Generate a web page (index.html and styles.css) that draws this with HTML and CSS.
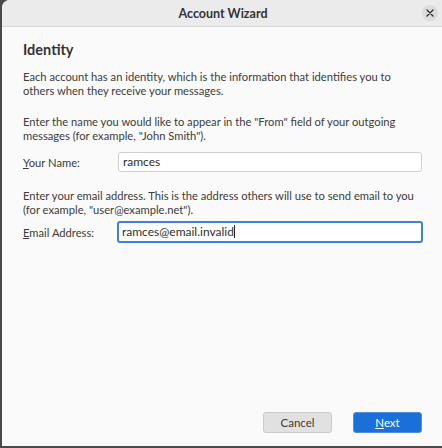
FILE: index.html
```html
<!DOCTYPE html>
<html lang="en">
<head>
<meta charset="utf-8">
<title>Account Wizard</title>
<link rel="stylesheet" href="styles.css">
</head>
<body>
<div class="window">
  <header class="titlebar">
    <span class="spacer"></span>
    <span class="title">Account Wizard</span>
    <span class="controls">
      <span class="close" aria-label="Close">
        <svg width="8" height="8" viewBox="0 0 8 8"><path d="M1 1 L7 7 M7 1 L1 7" stroke="#2e2e2e" stroke-width="1.3" stroke-linecap="round"/></svg>
      </span>
    </span>
  </header>
  <main class="content">
    <h1 class="heading">Identity</h1>
    <p class="para p1">Each account has an identity, which is the information that identifies you to others when they receive your messages.</p>
    <p class="para p2">Enter the name you would like to appear in the "From" field of your outgoing messages (for example, "John Smith").</p>
    <div class="row row-name">
      <label class="label"><u>Y</u>our Name:</label>
      <div class="input">ramces</div>
    </div>
    <p class="para p3">Enter your email address. This is the address others will use to send email to you (for example, "user@example.net").</p>
    <div class="row row-email">
      <label class="label"><u>E</u>mail Address:</label>
      <div class="input focused">ramces@email.invalid<span class="caret"></span></div>
    </div>
    <div class="grow"></div>
    <div class="buttons">
      <button class="btn cancel">Cancel</button>
      <button class="btn next"><u>N</u>ext</button>
    </div>
  </main>
</div>
</body>
</html>
```
FILE: styles.css
```css
html, body {
  margin: 0;
  padding: 0;
  width: 442px;
  height: 448px;
  overflow: hidden;
  background: #4a4a4a;
}
body {
  font-family: Lato, "Open Sans", sans-serif;
  color: #3c3c3c;
}
.window {
  margin-left: 2px;
  height: 446px;
  background: #fafafa;
  border-top-left-radius: 8px;
  display: flex;
  flex-direction: column;
  overflow: hidden;
}
.titlebar {
  height: 26px;
  flex: none;
  background: #ebebeb;
  border-bottom: 1px solid #d9d9d9;
  display: grid;
  grid-template-columns: 1fr auto 1fr;
  align-items: center;
}
.title {
  font-weight: bold;
  font-size: 12.5px;
  color: #333;
  padding-left: 2px;
}
.controls {
  display: flex;
  justify-content: flex-end;
  padding-right: 4px;
}
.close {
  width: 16px;
  height: 16px;
  border-radius: 50%;
  background: #dcdcdc;
  display: flex;
  align-items: center;
  justify-content: center;
  margin-top: -1px;
}
.close svg { display: block; }
.content {
  flex: 1;
  display: flex;
  flex-direction: column;
  padding: 14px 20px 13px 21px;
}
.heading {
  margin: 0;
  font-size: 14.5px;
  line-height: 17px;
  font-weight: bold;
  color: #333;
}
.para {
  margin: 0;
  font-size: 11.2px;
  line-height: 14px;
}
.p1 { margin-top: 12px; }
.p2 { margin-top: 17px; }
.p3 { margin-top: 17px; }
.row {
  display: flex;
  align-items: center;
}
.row-name { margin-top: 9px; }
.row-email { margin-top: 4px; }
.label {
  width: 95px;
  font-size: 11.2px;
}
.input {
  flex: 1;
  height: 18px;
  border: 1px solid #cfcfcf;
  border-radius: 3px;
  background: #fff;
  font-size: 12px;
  line-height: 18px;
  padding: 0 4px;
  color: #2e2e2e;
}
.input.focused {
  height: 18px;
  border: 2px solid #3584e4;
  margin-left: -1px;
  margin-right: -1px;
  padding: 0 3px;
}
.caret {
  display: inline-block;
  width: 1px;
  height: 13px;
  background: #222;
  vertical-align: -2px;
}
.grow { flex: 1; }
.buttons {
  display: flex;
  justify-content: flex-end;
  gap: 21px;
}
.btn {
  width: 69px;
  height: 21px;
  border-radius: 3px;
  font-family: inherit;
  font-size: 11.5px;
  padding: 0;
  cursor: default;
}
.cancel {
  background: #e1e1e1;
  border: 1px solid #cbcbcb;
  color: #3c3c3c;
}
.next {
  background: #1b6fd8;
  border: 1px solid #4f8fe0;
  color: #fff;
}
```
